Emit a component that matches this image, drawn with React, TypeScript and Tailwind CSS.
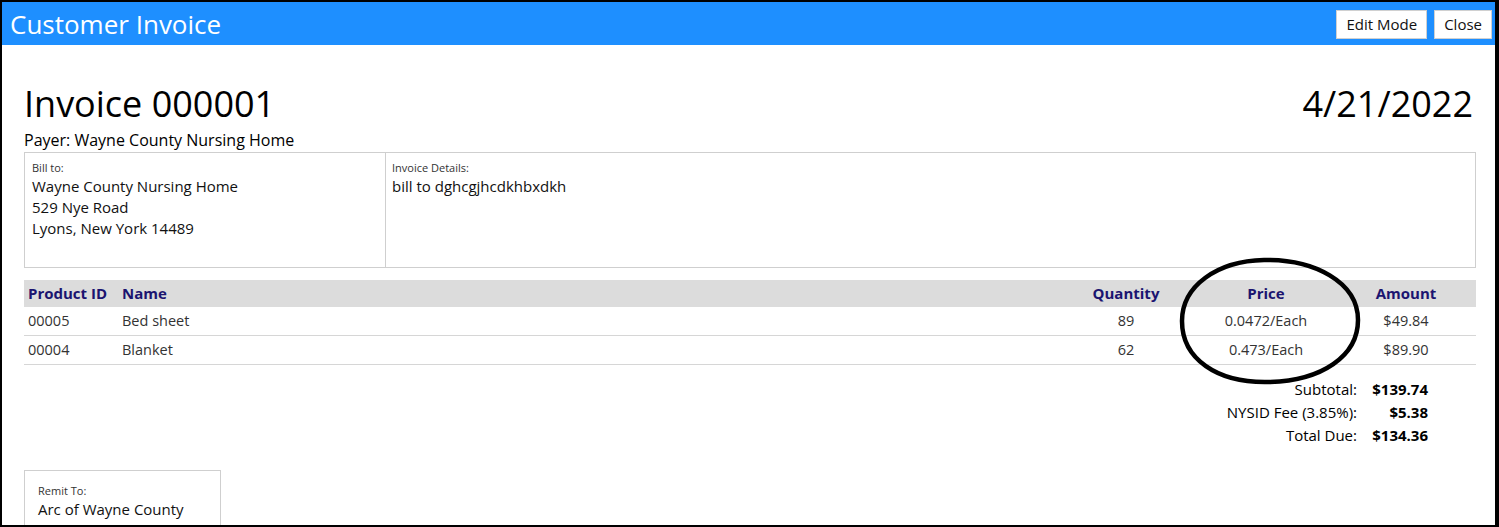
import React from 'react';

type Line = { id: string; name: string; qty: number; price: string; amount: string };

const lines: Line[] = [
  { id: '00005', name: 'Bed sheet', qty: 89, price: '0.0472/Each', amount: '$49.84' },
  { id: '00004', name: 'Blanket', qty: 62, price: '0.473/Each', amount: '$89.90' },
];

const totals = [
  { label: 'Subtotal:', value: '$139.74' },
  { label: 'NYSID Fee (3.85%):', value: '$5.38' },
  { label: 'Total Due:', value: '$134.36' },
];

const font = { fontFamily: '"Open Sans", "Noto Sans", sans-serif' };

export default function App() {
  return (
    <div
      className="relative h-[527px] w-[1499px] overflow-hidden border-t-2 border-l-2 border-b-2 border-r-4 border-black bg-white text-[#222]"
      style={font}
    >
      {/* title bar */}
      <div className="flex h-[43px] items-center justify-between bg-[#1e8fff] pl-[8px] pr-[3px]">
        <h1 className="text-[26px] leading-none text-white">Customer Invoice</h1>
        <div className="flex gap-[7px] pt-[1px]">
          <button className="h-[29px] border border-[#d0d0d0] bg-white px-[9px] text-[15px] text-[#111]">Edit Mode</button>
          <button className="h-[29px] border border-[#d0d0d0] bg-white px-[9px] text-[15px] text-[#111]">Close</button>
        </div>
      </div>

      <div className="pl-[22px] pr-[19px] pt-[37px]">
        <div className="flex items-start justify-between">
          <h2 className="text-[36px] leading-[44px] text-black">Invoice 000001</h2>
          <div className="pr-[3px] text-[36px] leading-[44px] text-black">4/21/2022</div>
        </div>
        <div className="mt-[3px] text-[16px] leading-[23px] text-black">Payer: Wayne County Nursing Home</div>

        <div className="flex h-[116px] border border-[#cfcfcf]">
          <div className="w-[361px] border-r border-[#cfcfcf] px-[7px] pt-[7px]">
            <div className="text-[11px] leading-[16px] text-[#333]">Bill to:</div>
            <div className="text-[15px] leading-[21px] text-[#111]">
              <div>Wayne County Nursing Home</div>
              <div>529 Nye Road</div>
              <div>Lyons, New York 14489</div>
            </div>
          </div>
          <div className="flex-1 px-[6px] pt-[7px]">
            <div className="text-[11px] leading-[16px] text-[#333]">Invoice Details:</div>
            <div className="text-[15px] leading-[21px] text-[#111]">bill to dghcgjhcdkhbxdkh</div>
          </div>
        </div>

        {/* line items */}
        <div className="mt-[12px]">
          <div className="grid h-[27px] grid-cols-[98px_1fr_140px_140px_140px] items-center bg-[#dcdcdc] text-[15px] font-bold text-[#1b1470]">
            <div className="pl-[4px]">Product ID</div>
            <div>Name</div>
            <div className="text-center">Quantity</div>
            <div className="text-center">Price</div>
            <div className="text-center">Amount</div>
          </div>
          {lines.map((l) => (
            <div
              key={l.id}
              className="grid h-[29px] grid-cols-[98px_1fr_140px_140px_140px] items-center border-b border-[#d6d6d6] text-[14.5px] text-[#333]"
            >
              <div className="pl-[4px]">{l.id}</div>
              <div>{l.name}</div>
              <div className="text-center">{l.qty}</div>
              <div className="text-center">{l.price}</div>
              <div className="text-center">{l.amount}</div>
            </div>
          ))}
        </div>

        <div className="mt-[13px] flex justify-end pr-[48px]">
          <div className="grid grid-cols-[auto_71px] text-[15px] leading-[23px] text-black">
            {totals.map((t) => (
              <React.Fragment key={t.label}>
                <div className="text-right">{t.label}</div>
                <div className="text-right font-bold">{t.value}</div>
              </React.Fragment>
            ))}
          </div>
        </div>

        <div className="mt-[23px] h-[80px] w-[197px] border border-[#cfcfcf] px-[13px] pt-[12px]">
          <div className="text-[11px] leading-[16px] text-[#333]">Remit To:</div>
          <div className="text-[15px] leading-[21px] text-[#111]">Arc of Wayne County</div>
        </div>
      </div>

      {/* hand-drawn highlight around the price column */}
      <svg className="pointer-events-none absolute left-[1170px] top-[248px]" width="200" height="142" viewBox="0 0 200 142">
        <path
          d="M92 10 C142 9 186 32 186 70 C186 106 150 131 96 132 C45 133 10 109 10 71 C10 36 45 11 92 10 Z"
          fill="none"
          stroke="#000"
          strokeWidth="4.5"
        />
      </svg>
    </div>
  );
}
